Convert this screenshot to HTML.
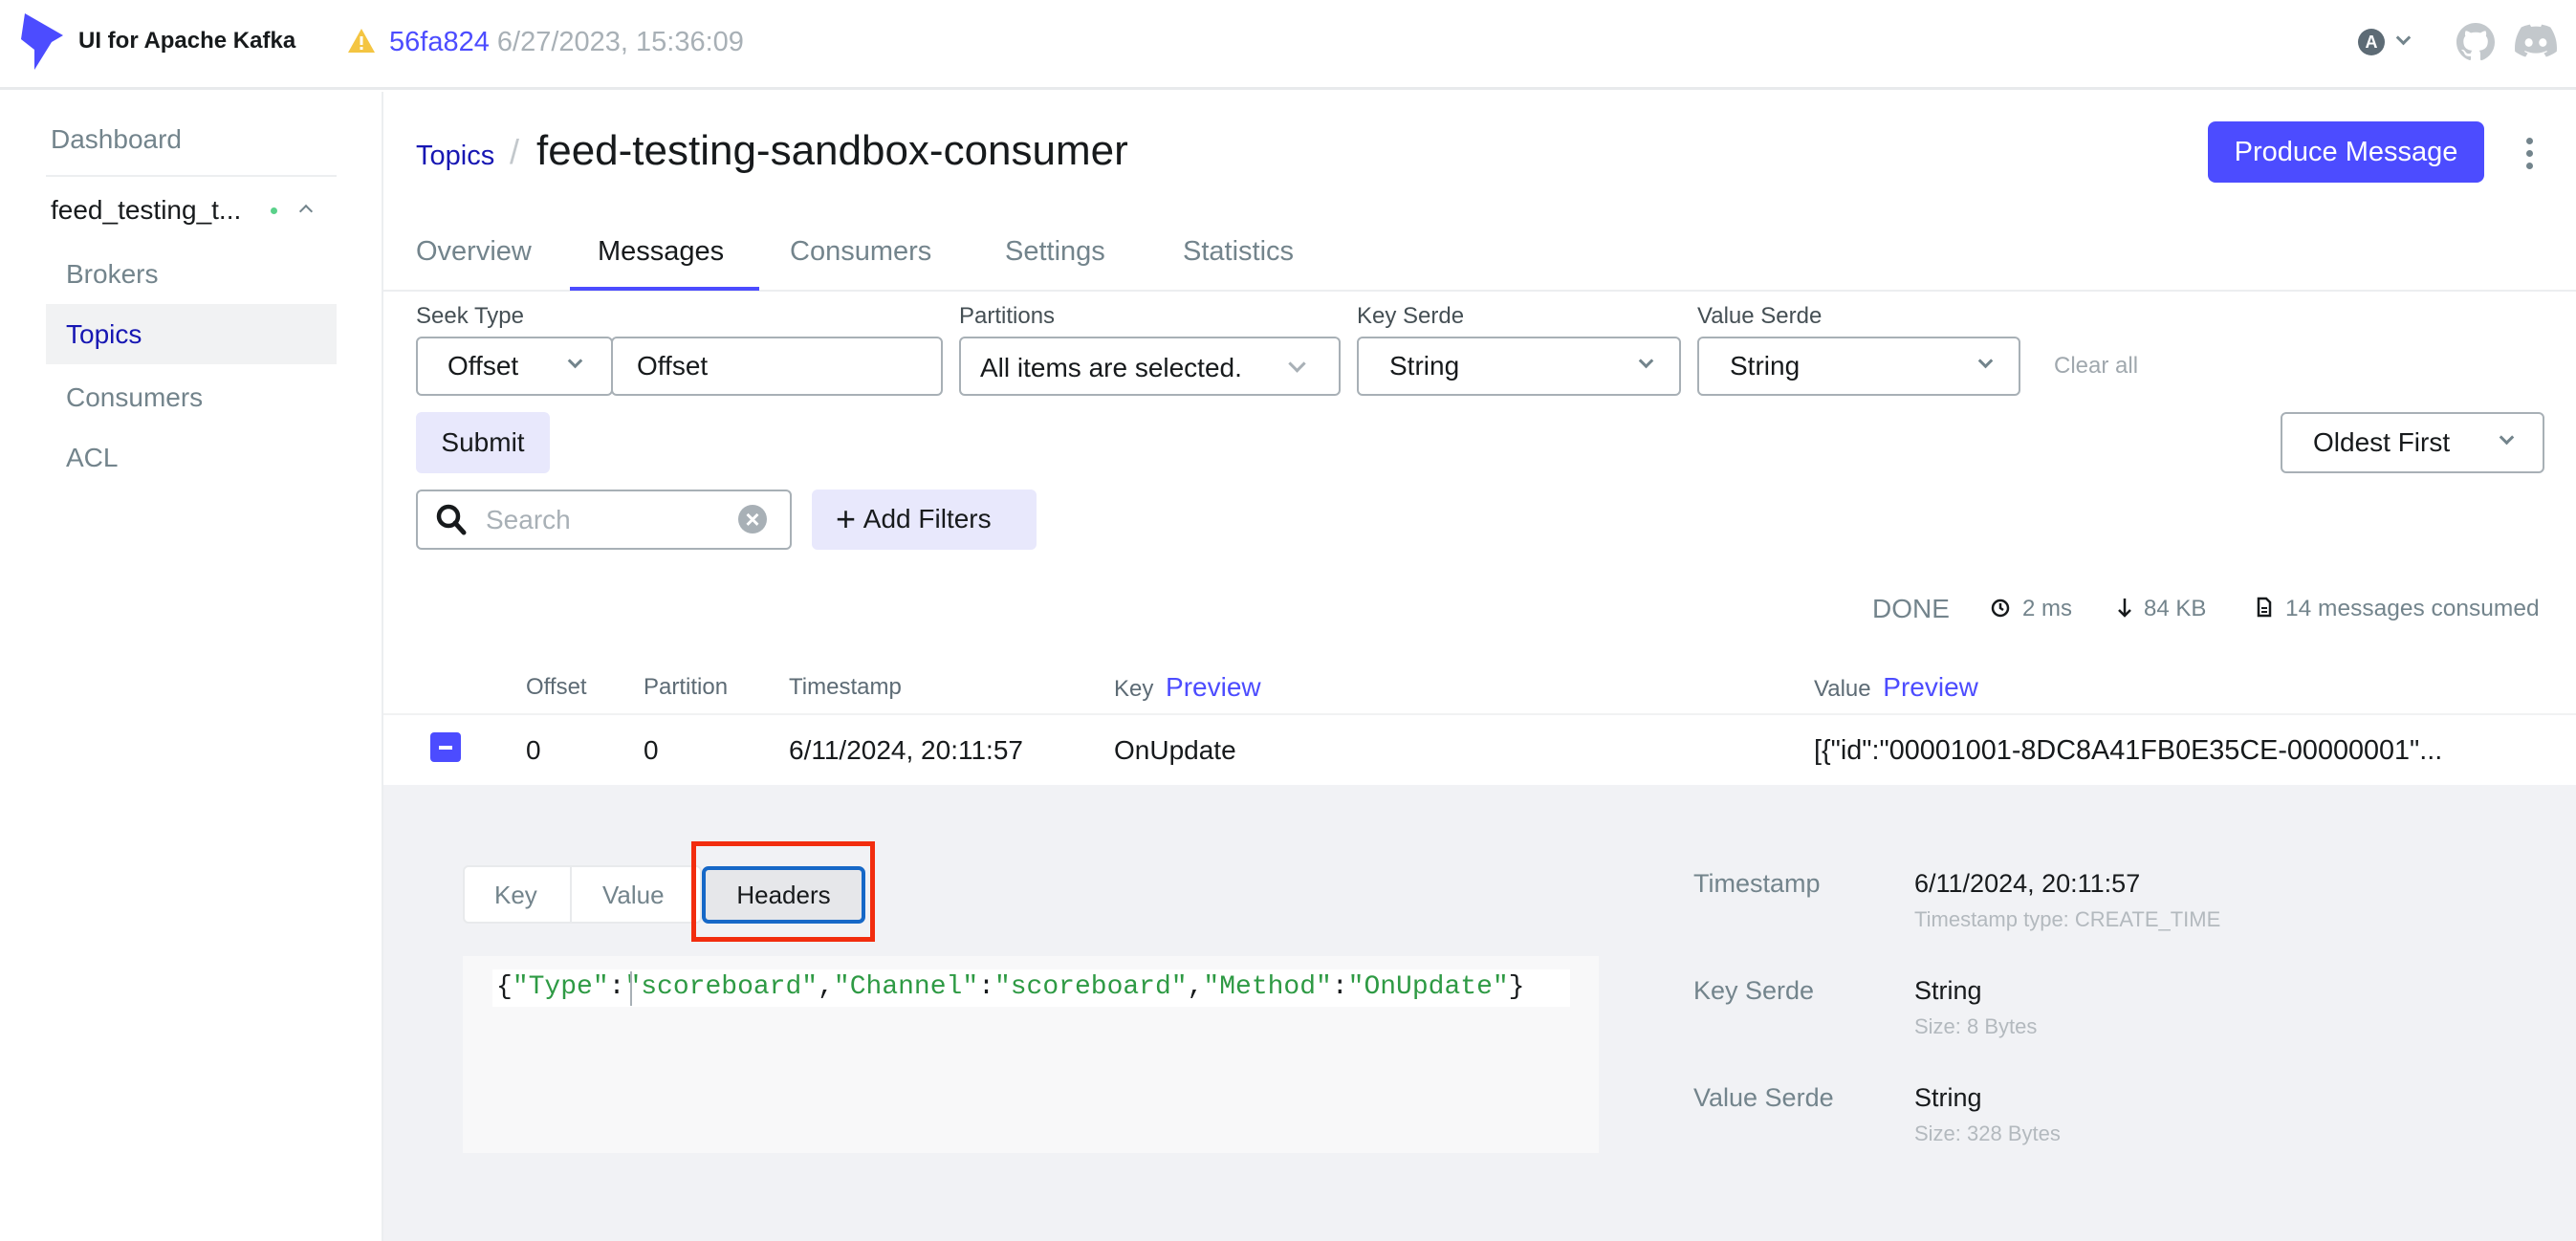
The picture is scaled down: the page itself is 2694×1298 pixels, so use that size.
<!DOCTYPE html>
<html><head><meta charset="utf-8"><style>
*{box-sizing:border-box;margin:0;padding:0}
body{width:2694px;height:1298px;overflow:hidden;background:#fff;font-family:"Liberation Sans",sans-serif;color:#171a1c;position:relative}
.a{position:absolute;white-space:nowrap;line-height:40px}
.box{position:absolute;border:2px solid #a8b0b6;border-radius:6px;background:#fff}
.chev{position:absolute;width:13px;height:13px;border-right:3px solid #73848c;border-bottom:3px solid #73848c;transform:rotate(45deg)}
.g{color:#73848c}
</style></head><body>
<div style="position:absolute;left:0;top:0;width:2694px;height:94px;border-bottom:3px solid #e8eaec"></div>
<svg style="position:absolute;left:0;top:0" width="80" height="90"><polygon points="26,14 66,37 54,44 36,73 36,52 22,41" fill="#4c4cff"/></svg>
<div class="a" style="left:82px;top:23px;font-size:24px;font-weight:bold">UI for Apache Kafka</div>
<svg style="position:absolute;left:363px;top:29px" width="30" height="27"><polygon points="15,1 29,26 1,26" fill="#f4c542"/><rect x="13.5" y="9" width="3" height="9" fill="#fff"/><rect x="13.5" y="20" width="3" height="3" fill="#fff"/></svg>
<div class="a" style="left:407px;top:24px;font-size:29px;color:#4c4cff">56fa824 <span style="color:#a8b0b6">6/27/2023, 15:36:09</span></div>
<div style="position:absolute;left:2466px;top:30px;width:28px;height:28px;border-radius:50%;background:#5d6b75;color:#fff;font-size:18px;font-weight:bold;text-align:center;line-height:28px">A</div>
<div class="chev" style="left:2508px;top:34px;width:11px;height:11px"></div>
<svg style="position:absolute;left:2569px;top:24px" width="40" height="40" viewBox="0 0 16 16"><path fill="#c3c8cc" d="M8 0C3.58 0 0 3.58 0 8c0 3.540 2.29 6.53 5.47 7.59.4.07.55-.17.55-.38v-1.33c-2.23.48-2.7-1.070-2.7-1.07-.36-.92-.89-1.17-.89-1.17-.73-.5.06-.49.06-.49.8.06 1.23.83 1.23.83.71 1.22 1.87.87 2.33.66.07-.52.28-.87.51-1.07-1.78-.2-3.64-.89-3.64-3.95 0-.87.31-1.59.82-2.15-.08-.2-.36-1.02.08-2.12 0 0 .67-.21 2.2.82a7.6 7.6 0 014 0c1.53-1.04 2.2-.82 2.2-.82.44 1.1.16 1.92.08 2.12.51.56.82 1.27.82 2.15 0 3.07-1.87 3.75-3.65 3.95.29.25.54.73.54 1.48v2.2c0 .21.15.46.55.38A8 8 0 0016 8c0-4.42-3.58-8-8-8z"/></svg>
<svg style="position:absolute;left:2630px;top:25px" width="44" height="36" viewBox="0 0 24 19"><path fill="#c3c8cc" d="M20.3 1.6A19.8 19.8 0 0015.4 0l-.6 1.3a18.3 18.3 0 00-5.5 0L8.6 0a19.7 19.7 0 00-4.9 1.6C.6 6.3-.3 10.9.1 15.4a19.9 19.9 0 006 3.1l1.3-2.1c-.7-.3-1.4-.6-2-1l.5-.4a14.2 14.2 0 0012.2 0l.5.4c-.6.4-1.3.7-2 1l1.3 2.1a19.8 19.8 0 006-3.1c.5-5.2-.9-9.8-3.6-13.8zM8 12.7c-1.2 0-2.2-1.1-2.2-2.4S6.8 7.9 8 7.9s2.2 1.1 2.2 2.4-1 2.4-2.2 2.4zm8 0c-1.2 0-2.2-1.1-2.2-2.4S14.8 7.9 16 7.9s2.2 1.1 2.2 2.4-1 2.4-2.2 2.4z"/></svg>
<div style="position:absolute;left:399px;top:96px;width:2px;height:1202px;background:#eceef0"></div>
<div class="a g" style="left:53px;top:126px;font-size:28px">Dashboard</div>
<div style="position:absolute;left:48px;top:183px;width:304px;height:2px;background:#eceef0"></div>
<div class="a" style="left:53px;top:200px;font-size:28px">feed_testing_t...</div>
<div style="position:absolute;left:283px;top:217px;width:7px;height:7px;border-radius:50%;background:#5ad18a"></div>
<div class="chev" style="left:315px;top:216px;width:10px;height:10px;border-width:2px;transform:rotate(-135deg)"></div>
<div class="a g" style="left:69px;top:267px;font-size:28px">Brokers</div>
<div style="position:absolute;left:48px;top:318px;width:304px;height:63px;background:#f1f2f3"></div>
<div class="a" style="left:69px;top:330px;font-size:28px;color:#1717b3">Topics</div>
<div class="a g" style="left:69px;top:396px;font-size:28px">Consumers</div>
<div class="a g" style="left:69px;top:459px;font-size:28px">ACL</div>
<div class="a" style="left:435px;top:143px;font-size:29px;color:#1717b3">Topics</div>
<div class="a" style="left:533px;top:139px;font-size:36px;color:#c3c8cc">/</div>
<div class="a" style="left:561px;top:138px;font-size:44px;font-weight:500">feed-testing-sandbox-consumer</div>
<div style="position:absolute;left:2309px;top:127px;width:289px;height:64px;background:#4c4cff;border-radius:8px;color:#fff;font-size:29px;text-align:center;line-height:64px">Produce Message</div>
<div style="position:absolute;left:2642px;top:144px;width:7px;height:7px;border-radius:50%;background:#73848c;box-shadow:0 13px 0 #73848c,0 26px 0 #73848c"></div>
<div class="a g" style="left:435px;top:243px;font-size:29px">Overview</div>
<div class="a" style="left:625px;top:243px;font-size:29px">Messages</div>
<div class="a g" style="left:826px;top:243px;font-size:29px">Consumers</div>
<div class="a g" style="left:1051px;top:243px;font-size:29px">Settings</div>
<div class="a g" style="left:1237px;top:243px;font-size:29px">Statistics</div>
<div style="position:absolute;left:401px;top:303px;width:2293px;height:2px;background:#eceef0"></div>
<div style="position:absolute;left:596px;top:300px;width:198px;height:4px;background:#4c4cff"></div>
<div class="a" style="left:435px;top:311px;font-size:24px;color:#454f54">Seek Type</div>
<div class="a" style="left:1003px;top:311px;font-size:24px;color:#454f54">Partitions</div>
<div class="a" style="left:1419px;top:311px;font-size:24px;color:#454f54">Key Serde</div>
<div class="a" style="left:1775px;top:311px;font-size:24px;color:#454f54">Value Serde</div>
<div class="box" style="left:435px;top:352px;width:206px;height:62px"></div>
<div class="a" style="left:468px;top:363px;font-size:28px">Offset</div><div class="chev" style="left:596px;top:372px;width:11px;height:11px"></div>
<div class="box" style="left:639px;top:352px;width:347px;height:62px"></div>
<div class="a" style="left:666px;top:363px;font-size:28px">Offset</div>
<div class="box" style="left:1003px;top:352px;width:399px;height:62px"></div>
<div class="a" style="left:1025px;top:365px;font-size:28px">All items are selected.</div><div class="chev" style="left:1350px;top:374px;width:13px;height:13px;border-color:#a8b0b6"></div>
<div class="box" style="left:1419px;top:352px;width:339px;height:62px"></div>
<div class="a" style="left:1453px;top:363px;font-size:28px">String</div><div class="chev" style="left:1716px;top:372px;width:11px;height:11px"></div>
<div class="box" style="left:1775px;top:352px;width:338px;height:62px"></div>
<div class="a" style="left:1809px;top:363px;font-size:28px">String</div><div class="chev" style="left:2071px;top:372px;width:11px;height:11px"></div>
<div class="a" style="left:2148px;top:363px;font-size:24px;color:#a0a8ae">Clear all</div>
<div style="position:absolute;left:435px;top:431px;width:140px;height:64px;background:#e8e8fc;border-radius:6px;font-size:28px;text-align:center;line-height:64px">Submit</div>
<div class="box" style="left:2385px;top:431px;width:276px;height:64px"></div>
<div class="a" style="left:2419px;top:443px;font-size:28px">Oldest First</div><div class="chev" style="left:2616px;top:452px;width:11px;height:11px"></div>
<div class="box" style="left:435px;top:512px;width:393px;height:63px"></div>
<svg style="position:absolute;left:455px;top:526px" width="34" height="36"><circle cx="14" cy="14" r="10" stroke="#171a1c" stroke-width="4.5" fill="none"/><line x1="21" y1="21" x2="30" y2="31" stroke="#171a1c" stroke-width="5" stroke-linecap="round"/></svg>
<div class="a" style="left:508px;top:524px;font-size:28px;color:#a8b0b6">Search</div>
<div style="position:absolute;left:772px;top:528px;width:30px;height:30px;border-radius:50%;background:#a8b0b6;color:#fff;font-size:26px;text-align:center;line-height:30px;font-weight:bold">×</div>
<div style="position:absolute;left:849px;top:512px;width:235px;height:63px;background:#e8e8fc;border-radius:6px"></div>
<div class="a" style="left:874px;top:523px;font-size:28px"><span style="font-size:36px;font-weight:300;vertical-align:-3px">+</span>&nbsp;Add Filters</div>
<div class="a g" style="left:1958px;top:617px;font-size:28px">DONE</div>
<svg style="position:absolute;left:2081px;top:625px" width="22" height="22"><circle cx="11" cy="11" r="8" stroke="#171a1c" stroke-width="2.5" fill="none"/><path d="M11 6v5l3 2" stroke="#171a1c" stroke-width="2.5" fill="none"/></svg>
<div class="a g" style="left:2115px;top:617px;font-size:24px">2 ms</div>
<svg style="position:absolute;left:2214px;top:624px" width="16" height="24"><path d="M8 2v18M2 14l6 6 6-6" stroke="#171a1c" stroke-width="2.5" fill="none"/></svg>
<div class="a g" style="left:2242px;top:617px;font-size:24px">84 KB</div>
<svg style="position:absolute;left:2360px;top:624px" width="16" height="22"><path d="M2 2h8l4 4v14H2z" stroke="#171a1c" stroke-width="2.5" fill="none"/><path d="M5 12h6M5 16h6" stroke="#171a1c" stroke-width="2"/></svg>
<div class="a g" style="left:2390px;top:617px;font-size:24.5px">14 messages consumed</div>
<div class="a" style="left:550px;top:699px;font-size:24px;color:#5d6b75">Offset</div>
<div class="a" style="left:673px;top:699px;font-size:24px;color:#5d6b75">Partition</div>
<div class="a" style="left:825px;top:699px;font-size:24px;color:#5d6b75">Timestamp</div>
<div class="a" style="left:1165px;top:699px;font-size:24px;color:#5d6b75">Key <span style="font-size:28px;color:#4c4cff;margin-left:6px">Preview</span></div>
<div class="a" style="left:1897px;top:699px;font-size:24px;color:#5d6b75">Value <span style="font-size:28px;color:#4c4cff;margin-left:6px">Preview</span></div>
<div style="position:absolute;left:401px;top:746px;width:2293px;height:2px;background:#f1f2f3"></div>
<div style="position:absolute;left:450px;top:766px;width:32px;height:31px;background:#4c4cff;border-radius:4px"></div>
<div style="position:absolute;left:459px;top:780px;width:14px;height:4px;background:#fff"></div>
<div class="a" style="left:550px;top:765px;font-size:28px">0</div>
<div class="a" style="left:673px;top:765px;font-size:28px">0</div>
<div class="a" style="left:825px;top:765px;font-size:28px">6/11/2024, 20:11:57</div>
<div class="a" style="left:1165px;top:765px;font-size:28px">OnUpdate</div>
<div class="a" style="left:1897px;top:765px;font-size:28.8px">[{"id":"00001001-8DC8A41FB0E35CE-00000001"...</div>
<div style="position:absolute;left:401px;top:821px;width:2293px;height:477px;background:#f1f2f5"></div>
<div style="position:absolute;left:484px;top:905px;width:250px;height:61px;background:#fff;border:2px solid #e8eaec;border-radius:6px"></div>
<div style="position:absolute;left:596px;top:907px;width:2px;height:57px;background:#e8eaec"></div>
<div class="a g" style="left:517px;top:916px;font-size:26px">Key</div>
<div class="a g" style="left:630px;top:916px;font-size:26px">Value</div>
<div style="position:absolute;left:734px;top:906px;width:171px;height:60px;background:#e6e7ea;border:4px solid #1668c7;border-radius:7px;font-size:26px;text-align:center;line-height:52px">Headers</div>
<div style="position:absolute;left:723px;top:880px;width:192px;height:105px;border:5px solid #f22d0e"></div>
<div style="position:absolute;left:484px;top:1000px;width:1188px;height:206px;background:#f8f8f9"></div>
<div style="position:absolute;left:515px;top:1014px;width:1127px;height:39px;background:#fff"></div>
<div class="a" style="left:519px;top:1013px;font-size:28px;font-family:'Liberation Mono',monospace;color:#171a1c">{<span style="color:#2e9a44">"Type"</span>:<span style="color:#2e9a44">"scoreboard"</span>,<span style="color:#2e9a44">"Channel"</span>:<span style="color:#2e9a44">"scoreboard"</span>,<span style="color:#2e9a44">"Method"</span>:<span style="color:#2e9a44">"OnUpdate"</span>}</div>
<div style="position:absolute;left:659px;top:1016px;width:2px;height:36px;background:#a8b0b6"></div>
<div class="a g" style="left:1771px;top:904px;font-size:27px">Timestamp</div>
<div class="a" style="left:2002px;top:904px;font-size:27px">6/11/2024, 20:11:57</div>
<div class="a" style="left:2002px;top:942px;font-size:22px;color:#b3b9be">Timestamp type: CREATE_TIME</div>
<div class="a g" style="left:1771px;top:1016px;font-size:27px">Key Serde</div>
<div class="a" style="left:2002px;top:1016px;font-size:27px">String</div>
<div class="a" style="left:2002px;top:1054px;font-size:22px;color:#b3b9be">Size: 8 Bytes</div>
<div class="a g" style="left:1771px;top:1128px;font-size:27px">Value Serde</div>
<div class="a" style="left:2002px;top:1128px;font-size:27px">String</div>
<div class="a" style="left:2002px;top:1166px;font-size:22px;color:#b3b9be">Size: 328 Bytes</div>
</body></html>
